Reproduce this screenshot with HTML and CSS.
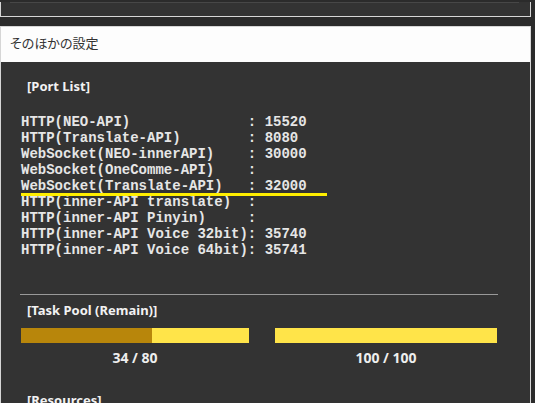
FILE: index.html
```html
<!DOCTYPE html>
<html lang="ja">
<head>
  <meta charset="UTF-8" />
  <meta name="viewport" content="width=device-width, initial-scale=1.0"/>
  <title>そのほかの設定</title>
  <link rel="stylesheet" href="styles.css">
</head>
<body>
  <div class="panel panel-prev">
    <div class="rule"></div>
  </div>

  <div class="panel">
    <div class="panel-title">そのほかの設定</div>
    <div class="panel-body">
      <div class="section-title">[Port List]</div>
      <div class="ports">
        <div class="port">HTTP(NEO-API)              : 15520</div>
        <div class="port">HTTP(Translate-API)        : 8080</div>
        <div class="port">WebSocket(NEO-innerAPI)    : 30000</div>
        <div class="port">WebSocket(OneComme-API)    :</div>
        <div class="port is-active">WebSocket(Translate-API)   : 32000</div>
        <div class="port">HTTP(inner-API translate)  :</div>
        <div class="port">HTTP(inner-API Pinyin)     :</div>
        <div class="port">HTTP(inner-API Voice 32bit): 35740</div>
        <div class="port">HTTP(inner-API Voice 64bit): 35741</div>
      </div>

      <hr class="divider">

      <div class="section-title">[Task Pool (Remain)]</div>
      <div class="pools">
        <div class="pool">
          <div class="bar"><div class="bar-used" style="width: 57.5%"></div></div>
          <div class="bar-label">34 / 80</div>
        </div>
        <div class="pool">
          <div class="bar"><div class="bar-used" style="width: 0%"></div></div>
          <div class="bar-label">100 / 100</div>
        </div>
      </div>

      <div class="section-title section-res">[Resources]</div>
    </div>
  </div>
</body>
</html>
```

FILE: styles.css
```css
body {
  margin: 0;
  padding: 0;
  background: #2b2b2b;
  font-family: "Noto Sans", Arial, sans-serif;
  overflow: hidden;
}
.panel {
  width: 529px;
  border: 1px solid #d6d6d6;
  background: #333;
}
.panel-prev {
  border-top: none;
  height: 14px;
}
.rule {
  margin: 2px 11px 0 9px;
  border-top: 1px solid #474747;
}
.panel + .panel {
  margin-top: 9px;
}
.panel-title {
  background: #fdfdfd;
  color: #333;
  height: 35px;
  line-height: 32px;
  padding-left: 9px;
  font-family: "Noto Sans CJK JP", sans-serif;
  font-size: 13px;
  font-feature-settings: "palt";
}
.panel-body {
  padding: 15px 32px 0 20px;
  color: #eee;
  height: 360px;
}
.section-title {
  padding-left: 6px;
  font-size: 13px;
  font-weight: bold;
  line-height: 18px;
  color: #f2f2f2;
}
.ports {
  margin-top: 19px;
}
.port {
  white-space: pre;
  font-family: "Liberation Mono", "Courier New", monospace;
  font-size: 14px;
  font-weight: bold;
  line-height: 16px;
  color: #e6e6e6;
}
.port.is-active {
  position: relative;
}
.port.is-active::after {
  content: "";
  position: absolute;
  left: 0;
  bottom: -2px;
  width: 306px;
  height: 3px;
  background: #ffee00;
}
.divider {
  border: none;
  border-top: 1px solid #999;
  margin: 36px 0 6px -1px;
}
.pools {
  display: grid;
  grid-template-columns: 228px 222px;
  gap: 26px;
  margin-top: 9px;
}
.bar {
  height: 15px;
  background: #ffe449;
}
.bar-used {
  height: 100%;
  background: #b8860b;
}
.bar-label {
  text-align: center;
  font-size: 14px;
  font-weight: bold;
  line-height: 18px;
  margin-top: 6px;
  color: #eee;
}
.section-res {
  margin-top: 24px;
}
```
